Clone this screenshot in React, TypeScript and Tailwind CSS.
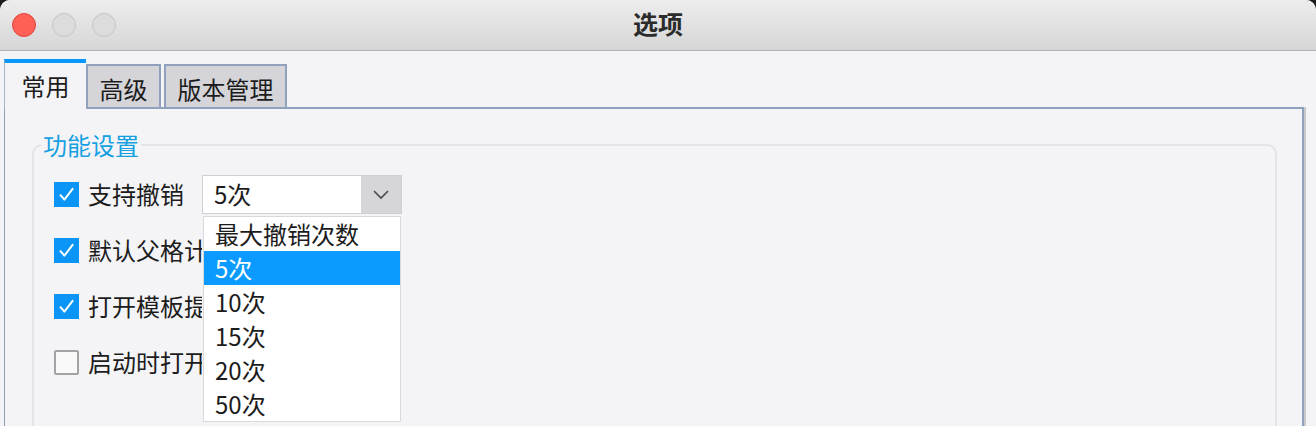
const options = ['最大撤销次数', '5次', '10次', '15次', '20次', '50次']

function CheckBox({ checked }: { checked: boolean }) {
  if (!checked) {
    return <div className="w-[25px] h-[25px] shrink-0 rounded-[2px] border-2 border-[#a3a3a6] bg-[#f9f9fa]" />
  }
  return (
    <div className="w-[25px] h-[25px] shrink-0 bg-[#0b95f6] flex items-center justify-center">
      <svg width="25" height="25" viewBox="0 0 25 25">
        <path d="M6.5 13.2 L10.4 17.6 L18.6 6.8" fill="none" stroke="white" strokeWidth="2" strokeLinecap="round" strokeLinejoin="round" />
      </svg>
    </div>
  )
}

function Row({ checked, label, children }: { checked: boolean; label: string; children?: React.ReactNode }) {
  return (
    <div className="h-[56px] flex items-center">
      <CheckBox checked={checked} />
      <span className="block ml-[9px] w-[114px] overflow-hidden whitespace-nowrap text-[24px] text-[#1c1c1c]">{label}</span>
      {children}
    </div>
  )
}

export default function App() {
  return (
    <div className="w-[1316px] h-[426px] overflow-hidden bg-[#1d1d1d] font-['Noto_Sans_CJK_SC',sans-serif]">
      <div className="h-full rounded-t-[10px] overflow-hidden bg-[#f4f4f6] flex flex-col">
        {/* title bar */}
        <div className="h-[51px] shrink-0 border-b border-[#b2b2b4] bg-gradient-to-b from-[#ededed] to-[#d6d6d6] grid grid-cols-[1fr_auto_1fr] items-center">
          <div className="flex items-center gap-4 pl-3">
            <div className="w-6 h-6 rounded-full bg-[#fe5f57] border border-[#e1463f]" />
            <div className="w-6 h-6 rounded-full bg-[#dcdcdc] border border-[#c5c5c5]" />
            <div className="w-6 h-6 rounded-full bg-[#dcdcdc] border border-[#c5c5c5]" />
          </div>
          <div className="text-[25px] font-bold text-[#2b2b2b] leading-none pb-[4px]">选项</div>
          <div />
        </div>

        {/* tabs + panel */}
        <div className="ml-[4px] w-[1300px] mt-[8px] flex flex-col flex-1">
          <div className="flex items-end h-[48px]">
            <div className="relative z-10 w-[82px] h-[50px] -mb-[2px] bg-[#f4f4f6] border-t-4 border-t-[#0a97fc] border-l border-l-[#a7b5cb] flex items-center justify-center text-[24px] text-[#1c1c1c]">
              常用
            </div>
            <div className="w-[75px] h-[43px] bg-[#d5d5d9] border-2 border-b-0 border-[#8fa1bd] flex items-center justify-center pt-[4px] text-[24px] text-[#1c1c1c]">
              高级
            </div>
            <div className="ml-[3px] w-[123px] h-[43px] bg-[#d5d5d9] border-2 border-b-0 border-[#8fa1bd] flex items-center justify-center pt-[4px] text-[24px] text-[#1c1c1c]">
              版本管理
            </div>
          </div>
          <div className="flex-1 border-t-2 border-l border-r-2 border-[#8fa1bd] shadow-[2px_0_0_#c9c9cc] pl-[27px] pt-[20px]">
            <fieldset className="w-[1245px] h-[320px] border-2 border-[#e4e4e8] rounded-[10px] pl-[20px] pt-[5px]">
              <legend className="-ml-[13px] px-[2px] text-[24px] leading-[32px] text-[#15a0e2]">功能设置</legend>
              <Row checked label="支持撤销">
                <div className="relative">
                  <div className="w-[200px] h-[39px] border border-[#cfcfd3] bg-white flex">
                    <div className="flex-1 flex items-center pl-[11px] text-[24px] text-[#1c1c1c]">5次</div>
                    <div className="w-[40px] bg-[#d6d6da] flex items-center justify-center">
                      <svg width="18" height="12" viewBox="0 0 18 12">
                        <path d="M2 3 L9 10 L16 3" fill="none" stroke="#4a4a4a" strokeWidth="1.6" />
                      </svg>
                    </div>
                  </div>
                  <div className="absolute z-20 left-[1px] top-[41px] w-[198px] bg-white border border-[#d9d9dc]">
                    {options.map((o, i) => (
                      <div
                        key={o}
                        className={
                          i === 1
                            ? 'h-[34px] flex items-center pl-[11px] text-[24px] bg-[#0b9bff] text-white'
                            : 'h-[34px] flex items-center pl-[11px] text-[24px] text-[#1c1c1c]'
                        }
                      >
                        {o}
                      </div>
                    ))}
                  </div>
                </div>
              </Row>
              <Row checked label="默认父格计算方式" />
              <Row checked label="打开模板提示" />
              <Row checked={false} label="启动时打开上次文件" />
            </fieldset>
          </div>
        </div>
      </div>
    </div>
  )
}
